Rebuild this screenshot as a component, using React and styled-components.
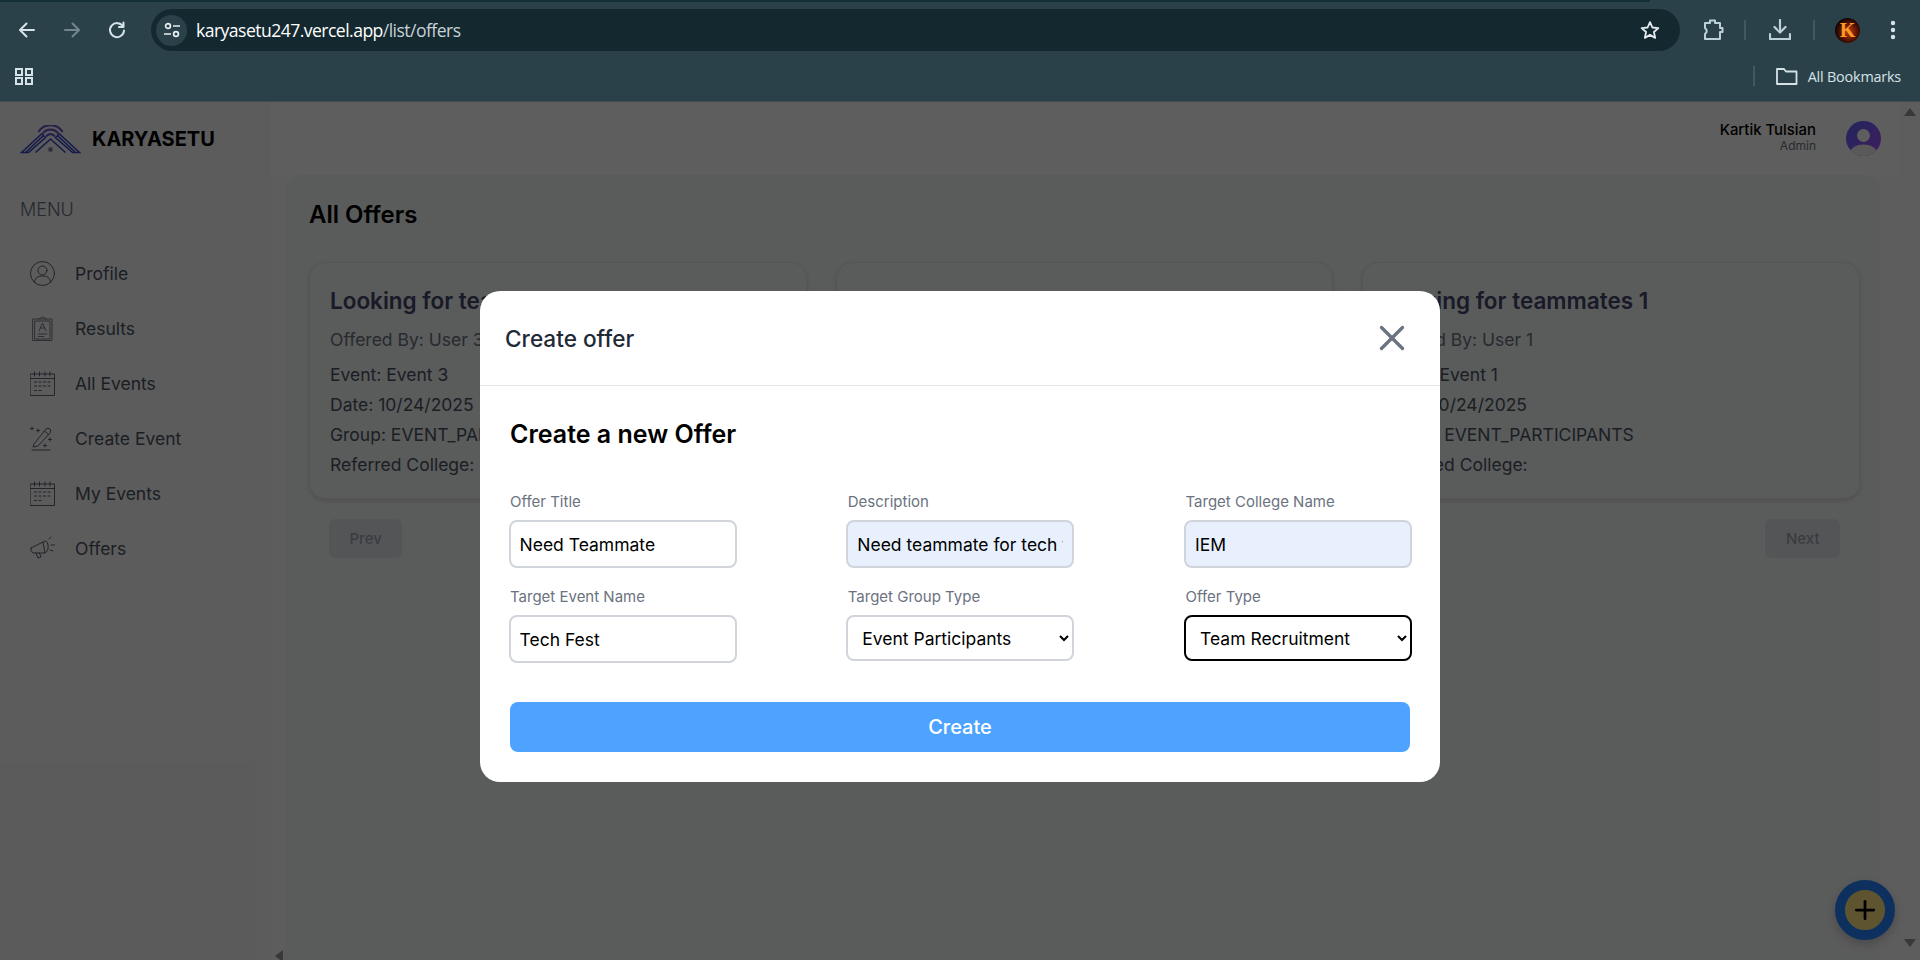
import styled, { createGlobalStyle } from "styled-components";
import { X, Plus } from "lucide-react";

const Global = createGlobalStyle`
  * { box-sizing: border-box; }
  html, body { margin: 0; padding: 0; height: 100%; overflow: hidden; }
  body { font-family: Inter, "Liberation Sans", sans-serif; background: #fff; }
`;

const Shell = styled.div`
  width: 1920px;
  height: 960px;
  display: flex;
  flex-direction: column;
  overflow: hidden;
`;

const Browser = styled.header`
  height: 102px;
  flex: none;
  background: linear-gradient(to right, #163038 1650px, #2b414a 1650px) top / 100% 2px no-repeat, #2b414a;
  border-bottom: 1px solid #3f4d52;
  display: flex;
  flex-direction: column;
  padding-top: 2px;
`;

const Toolbar = styled.div`
  height: 56px;
  display: flex;
  align-items: center;
  padding: 0 0 0 13px;
`;

const NavButton = styled.span`
  width: 28px;
  height: 28px;
  margin-right: ${(p) => p.$gap || 17}px;
  display: flex;
  align-items: center;
  justify-content: center;
  color: ${(p) => (p.$dim ? "#71868e" : "#d5e3e8")};
`;

const Omnibox = styled.div`
  width: 1529px;
  height: 42px;
  border-radius: 21px;
  background: #142830;
  display: flex;
  align-items: center;
  padding: 0 20px 0 5px;
  color: #fff;
  font-family: "Open Sans", sans-serif;
  font-size: 17.6px;
  letter-spacing: -0.55px;
`;

const SiteChip = styled.span`
  width: 31px;
  height: 31px;
  border-radius: 50%;
  background: #2b414a;
  display: flex;
  align-items: center;
  justify-content: center;
  margin-right: 9px;
`;

const Path = styled.span`
  color: #c6d2d6;
`;

const Spacer = styled.span`
  flex: 1;
`;

const ToolIcons = styled.div`
  display: flex;
  align-items: center;
  margin-left: 21px;
`;

const ToolDivider = styled.span`
  width: 2px;
  height: 20px;
  background: #42575f;
  margin: ${(p) => p.$margin};
`;

const Account = styled.span`
  width: 25px;
  height: 25px;
  border-radius: 50%;
  background: radial-gradient(circle at 55% 55%, #c2410c 0%, #5b1405 42%, #0a0402 72%);
  color: #fb9a24;
  font-family: "Liberation Serif", serif;
  font-weight: 700;
  font-size: 20px;
  line-height: 25px;
  text-align: center;
`;

const MoreDots = styled.svg`
  margin-left: 21px;
`;

const Bookmarks = styled.div`
  height: 36px;
  display: flex;
  align-items: center;
  padding: 0 19px 0 14px;
  color: #d5e3e8;
  font-family: "Open Sans", sans-serif;
  font-size: 14.4px;
  letter-spacing: -0.2px;
`;

const BookmarkLabel = styled.span`
  margin-left: 10px;
`;

const Page = styled.div`
  position: relative;
  flex: 1;
  display: flex;
  min-height: 0;
  background: #fff;
`;

const Sidebar = styled.aside`
  width: 270px;
  flex: none;
  background: #f8f8f8;
  padding: 21px 0 0 20px;
`;

const Brand = styled.div`
  display: flex;
  align-items: center;
  gap: 11px;
  font-size: 20px;
  font-weight: 700;
  color: #000;
  height: 32px;
`;

const MenuTitle = styled.div`
  margin-top: 44px;
  font-size: 18px;
  font-weight: 300;
  color: #6b7280;
  line-height: 22px;
`;

const Menu = styled.nav`
  margin-top: 25px;
  display: flex;
  flex-direction: column;
`;

const MenuItem = styled.a`
  height: 55px;
  display: flex;
  align-items: center;
  gap: 20px;
  padding-left: 10px;
  font-size: 17.5px;
  color: #4b5563;
`;

const Content = styled.main`
  flex: 1;
  min-width: 0;
  display: flex;
  flex-direction: column;
  padding-right: 20px;
  background: #fbfbfb;
`;

const TopBar = styled.div`
  height: 73px;
  flex: none;
  display: flex;
  align-items: flex-start;
  justify-content: flex-end;
  gap: 30px;
  padding: 19px 19px 0 0;
  background: #fff;
`;

const UserInfo = styled.div`
  text-align: right;
`;

const UserName = styled.div`
  font-size: 14.9px;
  font-weight: 500;
  line-height: 18px;
  color: #000;
`;

const UserRole = styled.div`
  font-size: 12px;
  line-height: 14px;
  color: #6b7280;
`;

const Avatar = styled.span`
  width: 35px;
  height: 35px;
  border-radius: 50%;
  overflow: hidden;
  display: block;
`;

const Panel = styled.section`
  flex: 1;
  margin: 0 20px 0 15px;
  background: #f5f6f7;
  border-radius: 16px 16px 0 0;
  padding: 25px 20px 0 24px;
`;

const PanelTitle = styled.h1`
  margin: 0;
  font-size: 24px;
  font-weight: 600;
  line-height: 30px;
  color: #000;
`;

const CardGrid = styled.div`
  margin-top: 32px;
  display: grid;
  grid-template-columns: repeat(3, 1fr);
  gap: 29px;
`;

const Card = styled.article`
  height: 237px;
  padding: 23px 20px 0;
  border: 1px solid #e5e7eb;
  border-radius: 16px;
  background: #f5f6f7;
  box-shadow: 0 2px 4px rgba(0, 0, 0, 0.12);
`;

const CardTitle = styled.h2`
  margin: 0 0 9px;
  font-size: 22.5px;
  font-weight: 600;
  line-height: 30px;
  color: #44476a;
  white-space: nowrap;
`;

const CardLine = styled.p`
  margin: 0 0 ${(p) => p.$after || 0}px;
  font-size: 17.5px;
  line-height: 30px;
  color: ${(p) => (p.$muted ? "#6b7280" : "#4b5563")};
  white-space: nowrap;
`;

const Pager = styled.div`
  margin-top: 20px;
  padding: 0 20px;
  display: flex;
  justify-content: space-between;
`;

const PageButton = styled.span`
  height: 39px;
  padding: 0 20.5px;
  border-radius: 6px;
  background: #e5e7eb;
  color: #9ca3af;
  font-size: 15px;
  font-weight: 500;
  display: flex;
  align-items: center;
`;

const ScrollArrow = styled.span`
  position: absolute;
  width: 0;
  height: 0;
  border-style: solid;
  right: ${(p) => p.$right}px;
  ${(p) => p.$y};
  border-width: ${(p) => p.$widths};
  border-color: ${(p) => p.$colors};
`;

const Fab = styled.span`
  position: absolute;
  right: 25px;
  bottom: 20px;
  width: 60px;
  height: 60px;
  border-radius: 50%;
  background: #ffe682;
  border: 10px solid #2884ff;
  color: #000;
  display: flex;
  align-items: center;
  justify-content: center;
  box-shadow: 0 4px 10px rgba(0, 0, 0, 0.2);
`;

const Backdrop = styled.div`
  position: absolute;
  inset: 0;
  background: rgba(0, 0, 0, 0.63);
  display: flex;
  justify-content: center;
  align-items: flex-start;
  padding-top: 189px;
`;

const Modal = styled.div`
  width: 960px;
  height: 491px;
  border-radius: 20px;
  background: #fff;
  overflow: hidden;
`;

const ModalHead = styled.div`
  height: 95px;
  display: flex;
  align-items: center;
  justify-content: space-between;
  padding: 0 27px 0 25px;
  border-bottom: 1px solid #e5e7eb;
`;

const ModalTitle = styled.h3`
  margin: 0;
  font-size: 22.6px;
  font-weight: 500;
  color: #1f2937;
`;

const CloseButton = styled.span`
  color: #6b7280;
  display: flex;
`;

const ModalBody = styled.form`
  padding: 33px 30px 0;
`;

const FormTitle = styled.h4`
  margin: 0;
  font-size: 25px;
  font-weight: 600;
  line-height: 30px;
  color: #000;
`;

const FormGrid = styled.div`
  margin: 44px -2px 0 -1.5px;
  display: grid;
  grid-template-columns: repeat(3, 228px);
  justify-content: space-between;
  row-gap: 20px;
`;

const Field = styled.label`
  display: flex;
  flex-direction: column;
  gap: 9px;
`;

const FieldLabel = styled.span`
  padding-left: 1.5px;
  font-size: 15px;
  line-height: 18px;
  color: #6b7280;
`;

const TextInput = styled.input`
  width: 228px;
  height: 48px;
  padding: 0 9px;
  border: 2px solid #d1d5db;
  border-radius: 8px;
  outline: none;
  font-family: Inter, sans-serif;
  font-size: 17.5px;
  color: #000;
  background: ${(p) => (p.$filled ? "#e8f0fe" : "#fff")};
`;

const SelectInput = styled.select`
  width: 228px;
  height: 46px;
  padding: 0 10px;
  border: 2px solid ${(p) => (p.$focus ? "#000" : "#d1d5db")};
  border-radius: 8px;
  outline: none;
  font-family: Inter, sans-serif;
  font-size: 17.5px;
  color: #000;
  background: #fff;
`;

const SubmitButton = styled.button`
  display: block;
  width: 100%;
  height: 50px;
  margin-top: 39px;
  border: 0;
  border-radius: 8px;
  background: #4da3ff;
  color: #fff;
  font-family: Inter, sans-serif;
  font-size: 20px;
  font-weight: 500;
`;

const stroke = { fill: "none", stroke: "currentColor", strokeWidth: 2, strokeLinecap: "round", strokeLinejoin: "round" };
const thin = { fill: "none", stroke: "#4b5563", strokeWidth: 0.9, strokeLinecap: "round", strokeLinejoin: "round" };

function Logo() {
  return (
    <svg width="61" height="29" viewBox="0 0 60 29" fill="none" stroke="#3a48c8" strokeWidth="1.6">
      <path d="M1 27.5 L21 9 L25 12.5 L8 27.5 Z M5 27.5 L22.5 11 M59 27.5 L39 9 L35 12.5 L52 27.5 Z M55 27.5 L37.5 11" />
      <path d="M15 27.5 L30 14 L45 27.5" />
      <path d="M18 7 A14 14 0 0 1 42 7 M21.8 9.3 A9.5 9.5 0 0 1 38.2 9.3 M25.7 11.5 A5 5 0 0 1 34.3 11.5" stroke="#7058c8" strokeWidth="2.2" />
      <rect x="28" y="22.5" width="4" height="4" fill="#7a7a9a" stroke="none" />
    </svg>
  );
}

function ProfileIcon() {
  return (
    <svg width="25" height="25" viewBox="0 0 25 25" {...thin}>
      <circle cx="12.5" cy="12.5" r="12" />
      <circle cx="12.5" cy="9.5" r="4.5" />
      <path d="M4.5 21 C5 16.5 8 15 12.5 15 C17 15 20 16.5 20.5 21" />
    </svg>
  );
}

function ResultsIcon() {
  return (
    <svg width="25" height="25" viewBox="0 0 25 25" {...thin} stroke="#6b7280">
      <rect x="3" y="3" width="19" height="21.5" />
      <rect x="5" y="5" width="15" height="18" />
      <path d="M9 3 L12.5 0.8 L16 3 M9 15 L12.5 7 L16 15 M10.5 12 H14.5 M8 18 H17 M8 20.5 H14" />
    </svg>
  );
}

function CalendarIcon() {
  return (
    <svg width="25" height="25" viewBox="0 0 25 25" {...thin}>
      <rect x="0.5" y="3" width="24" height="21.5" />
      <path d="M0.5 7.5 H24.5 M4.5 1 V5 M9.5 1 V5 M15 1 V5 M20 1 V5" />
      <path d="M4 11 H21 M4 15 H21 M4 19.5 H12" strokeDasharray="3 1.5" strokeLinecap="butt" />
    </svg>
  );
}

function WandIcon() {
  return (
    <svg width="25" height="25" viewBox="0 0 25 25" {...thin}>
      <path d="M4 18 L16 3 Q18 1.5 20 3 Q21.5 5 20 7 L8 20 L3.5 21 Z M14.5 5 L18.5 8.5 M2 24 H20" />
      <path d="M2 1 V4 M0.5 2.5 H3.5 M8 3 V6 M6.5 4.5 H9.5 M20 12 V15 M18.5 13.5 H21.5 M15 18 V21 M13.5 19.5 H16.5" />
    </svg>
  );
}

function MegaphoneIcon() {
  return (
    <svg width="25" height="25" viewBox="0 0 25 25" {...thin}>
      <path d="M1 12 L13 6 L15 17 L3 17 Q0 15 1 12 Z M13 6 Q17 3 18 9 Q19 15 15 17 M6 17 L8 22 L11 21 L9.5 17" />
      <path d="M19 3 L21 1 M21 9 H24.5 M20 14 L23 15" />
    </svg>
  );
}

function AvatarIcon() {
  return (
    <svg width="35" height="35" viewBox="0 0 35 35">
      <defs>
        <linearGradient id="av" x1="0" y1="0" x2="1" y2="1">
          <stop offset="0" stopColor="#5a68ff" />
          <stop offset="1" stopColor="#b050ff" />
        </linearGradient>
      </defs>
      <rect width="35" height="35" fill="url(#av)" />
      <circle cx="17.5" cy="14.5" r="6.5" fill="#fff" />
      <ellipse cx="17.5" cy="31" rx="13" ry="7.5" fill="#f2f2f2" />
    </svg>
  );
}

const MENU = [
  ["Profile", ProfileIcon],
  ["Results", ResultsIcon],
  ["All Events", CalendarIcon],
  ["Create Event", WandIcon],
  ["My Events", CalendarIcon],
  ["Offers", MegaphoneIcon],
];

const OFFERS = [3, 2, 1];

function App() {
  return (
    <Shell>
      <Global />
      <Browser>
        <Toolbar>
          <NavButton>
            <svg width="20" height="20" viewBox="0 0 20 20" {...stroke}><path d="M17 10 H3.5 M9.5 3.5 L3 10 L9.5 16.5" /></svg>
          </NavButton>
          <NavButton $dim>
            <svg width="20" height="20" viewBox="0 0 20 20" {...stroke}><path d="M3 10 H16.5 M10.5 3.5 L17 10 L10.5 16.5" /></svg>
          </NavButton>
          <NavButton $gap={20}>
            <svg width="20" height="20" viewBox="0 0 20 20" {...stroke}><path d="M16 6.5 A7 7 0 1 0 17 10.5 M16.5 2.5 V7 H12" /></svg>
          </NavButton>
          <Omnibox>
            <SiteChip>
              <svg width="18" height="18" viewBox="0 0 18 18" fill="none" stroke="#e6eef1" strokeWidth="1.7">
                <circle cx="5" cy="5" r="2.4" />
                <circle cx="13" cy="13" r="2.4" />
                <path d="M10 5 H17 M1 13 H8" />
              </svg>
            </SiteChip>
            karyasetu247.vercel.app<Path>/list/offers</Path>
            <Spacer />
            <svg width="20" height="20" viewBox="0 0 24 24" fill="none" stroke="#e3ebee" strokeWidth="2.2" strokeLinejoin="round">
              <path d="M12 2.5 L14.9 9 L22 9.7 L16.7 14.4 L18.2 21.4 L12 17.8 L5.8 21.4 L7.3 14.4 L2 9.7 L9.1 9 Z" />
            </svg>
          </Omnibox>
          <ToolIcons>
            <svg width="24" height="24" viewBox="0 0 24 24" fill="none" stroke="#bcd0d8" strokeWidth="2" strokeLinejoin="round">
              <path d="M4 5 H9 V2.5 H14 V5 H19 V10 H21.5 V14 H19 V21 H4 V16 Q7.5 13 4 10 Z" />
            </svg>
            <ToolDivider $margin="0 23px 0 19px" />
            <svg width="22" height="22" viewBox="0 0 22 22" fill="none" stroke="#bcd0d8" strokeWidth="2.2" strokeLinecap="round" strokeLinejoin="round">
              <path d="M11 1 V13 M5.5 8 L11 13.5 L16.5 8 M1 15 V20 H21 V15" />
            </svg>
            <ToolDivider $margin="0 20px 0 22px" />
            <Account>K</Account>
            <MoreDots width="24" height="24" viewBox="0 0 24 24" fill="#d5e3e8">
              <circle cx="12" cy="5" r="2.2" />
              <circle cx="12" cy="12" r="2.2" />
              <circle cx="12" cy="19" r="2.2" />
            </MoreDots>
          </ToolIcons>
        </Toolbar>
        <Bookmarks>
          <svg width="20" height="20" viewBox="0 0 20 20" fill="none" stroke="#d5e3e8" strokeWidth="2">
            <rect x="2" y="3" width="6" height="6" />
            <rect x="12" y="3" width="6" height="6" />
            <rect x="2" y="12" width="6" height="6" />
            <rect x="12" y="12" width="6" height="6" />
          </svg>
          <Spacer />
          <ToolDivider $margin="0 21px 0 0" />
          <svg width="22" height="20" viewBox="0 0 22 20" fill="none" stroke="#d5e3e8" strokeWidth="1.8" strokeLinejoin="round">
            <path d="M1 3 H8 L10 5.5 H20.5 V18 H1 Z" />
          </svg>
          <BookmarkLabel>All Bookmarks</BookmarkLabel>
        </Bookmarks>
      </Browser>
      <Page>
        <Sidebar>
          <Brand>
            <Logo />
            KARYASETU
          </Brand>
          <MenuTitle>MENU</MenuTitle>
          <Menu>
            {MENU.map(([label, Icon]) => (
              <MenuItem key={label}>
                <Icon />
                {label}
              </MenuItem>
            ))}
          </Menu>
        </Sidebar>
        <Content>
          <TopBar>
            <UserInfo>
              <UserName>Kartik Tulsian</UserName>
              <UserRole>Admin</UserRole>
            </UserInfo>
            <Avatar>
              <AvatarIcon />
            </Avatar>
          </TopBar>
          <Panel>
            <PanelTitle>All Offers</PanelTitle>
            <CardGrid>
              {OFFERS.map((n) => (
                <Card key={n}>
                  <CardTitle>Looking for teammates {n}</CardTitle>
                  <CardLine $muted $after={5}>Offered By: User {n}</CardLine>
                  <CardLine>Event: Event {n}</CardLine>
                  <CardLine>Date: 10/24/2025</CardLine>
                  <CardLine>Group: EVENT_PARTICIPANTS</CardLine>
                  <CardLine>Referred College:</CardLine>
                </Card>
              ))}
            </CardGrid>
            <Pager>
              <PageButton>Prev</PageButton>
              <PageButton>Next</PageButton>
            </Pager>
          </Panel>
        </Content>
        <ScrollArrow $right={4} $y="top: 6px" $widths="0 6px 8px 6px" $colors="transparent transparent #999 transparent" />
        <ScrollArrow $right={4} $y="bottom: 13px" $widths="8px 6px 0 6px" $colors="#999 transparent transparent transparent" />
        <ScrollArrow $right={1637} $y="bottom: -2px" $widths="6px 8px 6px 0" $colors="transparent #999 transparent transparent" />
        <Fab>
          <Plus size={30} strokeWidth={2.2} />
        </Fab>
        <Backdrop>
          <Modal>
            <ModalHead>
              <ModalTitle>Create offer</ModalTitle>
              <CloseButton>
                <X size={42} strokeWidth={1.9} />
              </CloseButton>
            </ModalHead>
            <ModalBody>
              <FormTitle>Create a new Offer</FormTitle>
              <FormGrid>
                <Field>
                  <FieldLabel>Offer Title</FieldLabel>
                  <TextInput readOnly value="Need Teammate" />
                </Field>
                <Field>
                  <FieldLabel>Description</FieldLabel>
                  <TextInput $filled readOnly value="Need teammate for tech team" />
                </Field>
                <Field>
                  <FieldLabel>Target College Name</FieldLabel>
                  <TextInput $filled readOnly value="IEM" />
                </Field>
                <Field>
                  <FieldLabel>Target Event Name</FieldLabel>
                  <TextInput readOnly value="Tech Fest" />
                </Field>
                <Field>
                  <FieldLabel>Target Group Type</FieldLabel>
                  <SelectInput defaultValue="p">
                    <option value="p">Event Participants</option>
                  </SelectInput>
                </Field>
                <Field>
                  <FieldLabel>Offer Type</FieldLabel>
                  <SelectInput $focus defaultValue="t">
                    <option value="t">Team Recruitment</option>
                  </SelectInput>
                </Field>
              </FormGrid>
              <SubmitButton type="button">Create</SubmitButton>
            </ModalBody>
          </Modal>
        </Backdrop>
      </Page>
    </Shell>
  );
}

export default App;
